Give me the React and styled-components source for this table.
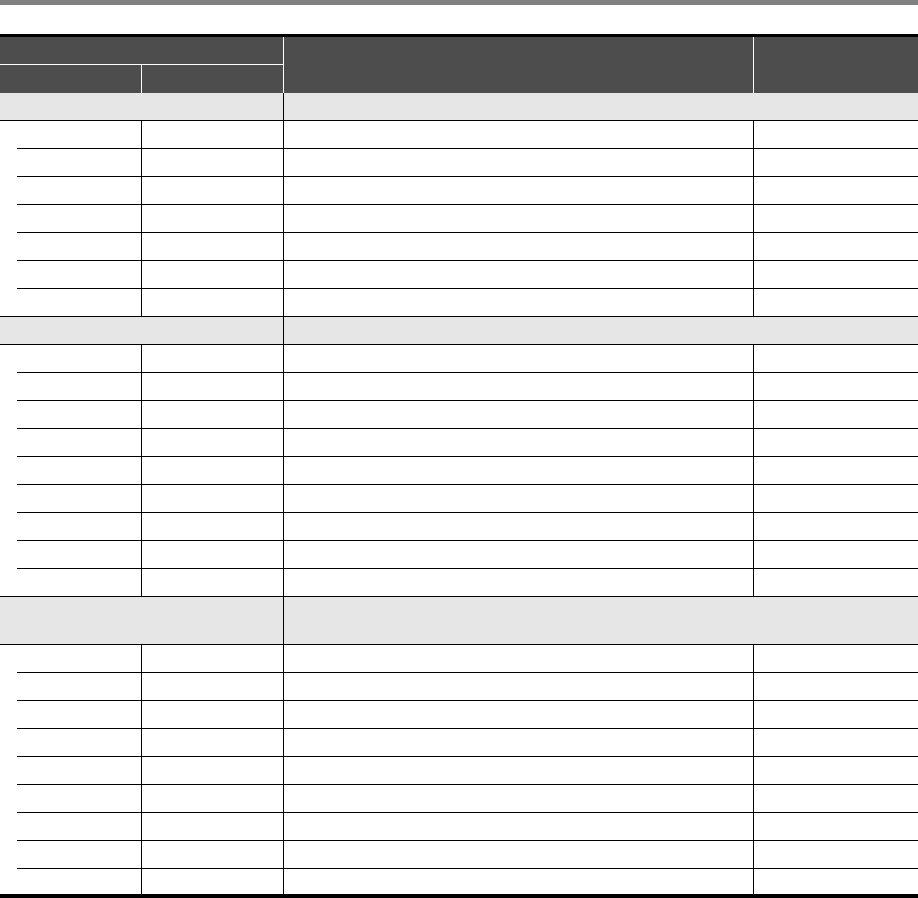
import React from "react";
import styled, { createGlobalStyle } from "styled-components";

const GlobalStyle = createGlobalStyle`
  html, body {
    margin: 0;
    padding: 0;
    background: #fff;
  }
  body {
    font-family: "Liberation Sans", Arial, sans-serif;
    width: 918px;
    height: 898px;
    overflow: hidden;
  }
`;

const TopBar = styled.div`
  height: 5px;
  background: #808080;
  margin-bottom: 29px;
`;

const Table = styled.table`
  width: 918px;
  table-layout: fixed;
  border-collapse: separate;
  border-spacing: 0;
  border-top: 3px solid #000;
  border-bottom: 4px solid #000;
`;

const HeadCell = styled.th`
  box-sizing: border-box;
  padding: 0;
  height: 28px;
  background: #4d4d4d;
  border-right: ${(p) => (p.$edge ? "none" : "1px solid #fff")};
  border-bottom: ${(p) => (p.$split ? "1px solid #fff" : "none")};
`;

const Group = styled.tbody`
  & + & > tr:first-child > td {
    border-top: 1px solid #000;
  }
  &:last-of-type > tr:last-child > td {
    height: 25px;
  }
`;

const GroupCell = styled.td`
  box-sizing: border-box;
  padding: 0;
  height: ${(p) => p.$h}px;
  background: #e6e6e6;
  border-bottom: 1px solid #000;
  border-right: ${(p) => (p.$edge ? "none" : "1px solid #000")};
`;

const Row = styled.tr`
  &:last-child > td {
    height: 27px;
    border-bottom: none;
    background-image: none;
  }
`;

const Cell = styled.td`
  box-sizing: border-box;
  padding: 0;
  height: 28px;
  border-bottom: 1px solid #000;
  border-right: ${(p) => (p.$edge ? "none" : "1px solid #000")};
`;

const IndentCell = styled(Cell)`
  border-bottom: none;
  background: linear-gradient(#000, #000) no-repeat right bottom /
    calc(100% - 17px) 1px;
`;

const groups = [
  { rows: 7, h: 28 },
  { rows: 9, h: 29 },
  { rows: 9, h: 49 },
];

export default function App() {
  return (
    <>
      <GlobalStyle />
      <TopBar />
      <Table>
        <colgroup>
          <col style={{ width: 142 }} />
          <col style={{ width: 142 }} />
          <col style={{ width: 470 }} />
          <col style={{ width: 164 }} />
        </colgroup>
        <thead>
          <tr>
            <HeadCell colSpan={2} $split />
            <HeadCell rowSpan={2} />
            <HeadCell rowSpan={2} $edge />
          </tr>
          <tr>
            <HeadCell />
            <HeadCell />
          </tr>
        </thead>
        {groups.map((g, gi) => (
          <Group key={gi}>
            <tr>
              <GroupCell colSpan={2} $h={g.h} />
              <GroupCell colSpan={2} $h={g.h} $edge />
            </tr>
            {Array.from({ length: g.rows }).map((_, ri) => (
              <Row key={ri}>
                <IndentCell />
                <Cell />
                <Cell />
                <Cell $edge />
              </Row>
            ))}
          </Group>
        ))}
      </Table>
    </>
  );
}
